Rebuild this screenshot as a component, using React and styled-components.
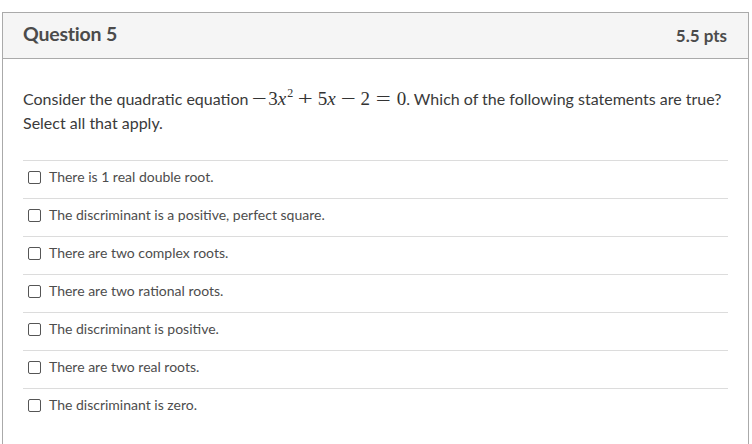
import React from 'react';
import styled, { createGlobalStyle } from 'styled-components';

const GlobalStyle = createGlobalStyle`
  html, body {
    margin: 0;
    padding: 0;
    background: #ffffff;
  }
  body {
    font-family: Lato, "Liberation Sans", sans-serif;
    overflow: hidden;
  }
`;

const Page = styled.div`
  padding: 12px 3px 0 2px;
  height: 444px;
  box-sizing: border-box;
`;

const Panel = styled.div`
  border: 1px solid #aaaaaa;
  border-bottom: none;
  height: 100%;
  box-sizing: border-box;
`;

const Header = styled.div`
  height: 45px;
  background: #f5f5f5;
  border-bottom: 1px solid #aaaaaa;
  display: flex;
  align-items: center;
  justify-content: space-between;
  padding: 0 21px 0 20px;
  color: #4b4b4b;
`;

const Title = styled.div`
  font-size: 19.5px;
  font-weight: 700;
  letter-spacing: -0.2px;
  margin-top: -4px;
`;

const Points = styled.div`
  font-size: 17px;
  font-weight: 700;
`;

const Body = styled.div`
  padding: 28px 20px 0 20px;
`;

const Prompt = styled.div`
  font-size: 16px;
  line-height: 24px;
  color: #3a3a3a;
  margin-bottom: 25px;
  white-space: nowrap;
`;

const MathText = styled.span`
  font-family: "Liberation Serif", "DejaVu Serif", serif;
  font-size: 19px;
  color: #333333;
`;

const Var = styled.i`
  font-family: "Liberation Serif", "DejaVu Serif", serif;
`;

const Sup = styled.sup`
  font-size: 12px;
  line-height: 0;
  vertical-align: 8px;
  margin-left: 1px;
`;

const Op = styled.span`
  display: inline-block;
  margin: 0 ${(p) => (p.$rel ? 8 : 7)}px;
  transform: scaleX(1.4);
`;

const Minus = styled.span`
  display: inline-block;
  transform: scaleX(1.4);
  margin: 0 3px 0 6px;
`;

const AnswerList = styled.div`
  display: flex;
  flex-direction: column;
`;

const Answer = styled.label`
  display: flex;
  align-items: center;
  height: 38px;
  border-top: 1px solid #dcdcdc;
  box-sizing: border-box;
  padding-left: 5px;
  padding-bottom: 6px;
  gap: 8px;
  font-size: 14px;
  color: #4d4d4d;
`;

const Box = styled.span`
  width: 11px;
  height: 11px;
  border: 1px solid #555555;
  border-radius: 2px;
  background: #ffffff;
  flex: 0 0 auto;
  margin-top: 1px;
`;

const answers = [
  'There is 1 real double root.',
  'The discriminant is a positive, perfect square.',
  'There are two complex roots.',
  'There are two rational roots.',
  'The discriminant is positive.',
  'There are two real roots.',
  'The discriminant is zero.',
];

export default function App() {
  return (
    <>
      <GlobalStyle />
      <Page>
        <Panel>
          <Header>
            <Title>Question 5</Title>
            <Points>5.5 pts</Points>
          </Header>
          <Body>
            <Prompt>
              Consider the quadratic equation
              <MathText>
                <Minus>−</Minus>3<Var>x</Var>
                <Sup>2</Sup>
                <Op>+</Op>5<Var>x</Var>
                <Op>−</Op>2<Op $rel>=</Op>0
              </MathText>
              . Which of the following statements are true?
              <br />
              Select all that apply.
            </Prompt>
            <AnswerList>
              {answers.map((a) => (
                <Answer key={a}>
                  <Box />
                  {a}
                </Answer>
              ))}
            </AnswerList>
          </Body>
        </Panel>
      </Page>
    </>
  );
}
